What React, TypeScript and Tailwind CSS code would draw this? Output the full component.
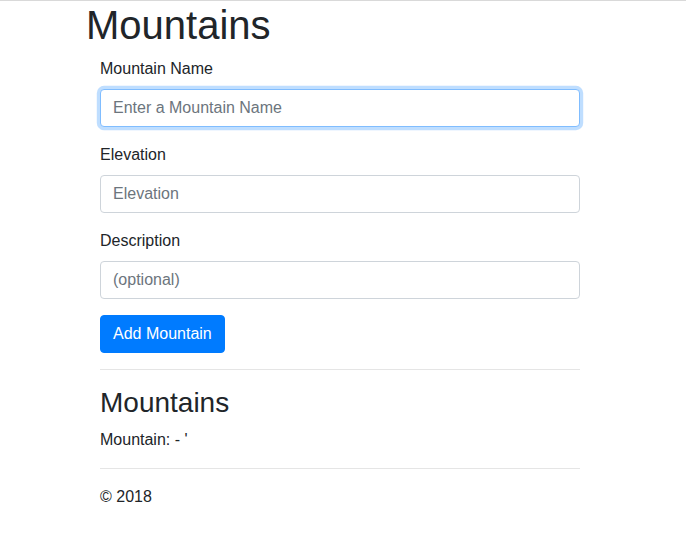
import React from 'react';

const inputBase =
  'block w-full h-[38px] px-3 py-1.5 text-base leading-6 text-[#495057] bg-white border rounded placeholder:text-[#6c757d] outline-none';

export default function App() {
  return (
    <div
      className="min-h-[533px] bg-white border-t border-[#d9d9d9] text-[#212529] text-base leading-6"
      style={{ fontFamily: '"Liberation Sans", Arial, sans-serif' }}
    >
      <div className="pl-[86px]">
        <h1 className="text-[40px] leading-[48px] font-medium mb-2">Mountains</h1>
        <div className="ml-[14px] w-[480px]">
          <form onSubmit={(e) => e.preventDefault()}>
            <div className="mb-4">
              <label className="block mb-2">Mountain Name</label>
              <input
                type="text"
                placeholder="Enter a Mountain Name"
                className={`${inputBase} border-[#80bdff] shadow-[0_0_0_3.2px_rgba(0,123,255,0.25)]`}
              />
            </div>
            <div className="mb-4">
              <label className="block mb-2">Elevation</label>
              <input type="text" placeholder="Elevation" className={`${inputBase} border-[#ced4da]`} />
            </div>
            <div className="mb-4">
              <label className="block mb-2">Description</label>
              <input type="text" placeholder="(optional)" className={`${inputBase} border-[#ced4da]`} />
            </div>
            <button
              type="submit"
              className="h-[38px] px-3 py-1.5 text-base leading-6 text-white bg-[#007bff] border border-[#007bff] rounded"
            >
              Add Mountain
            </button>
          </form>
          <hr className="my-4 border-0 border-t border-black/10" />
          <h3 className="text-[28px] leading-[33.6px] font-medium mb-2">Mountains</h3>
          <p className="mb-4">Mountain: - '</p>
          <hr className="my-4 border-0 border-t border-black/10" />
          <p>© 2018</p>
        </div>
      </div>
    </div>
  );
}
